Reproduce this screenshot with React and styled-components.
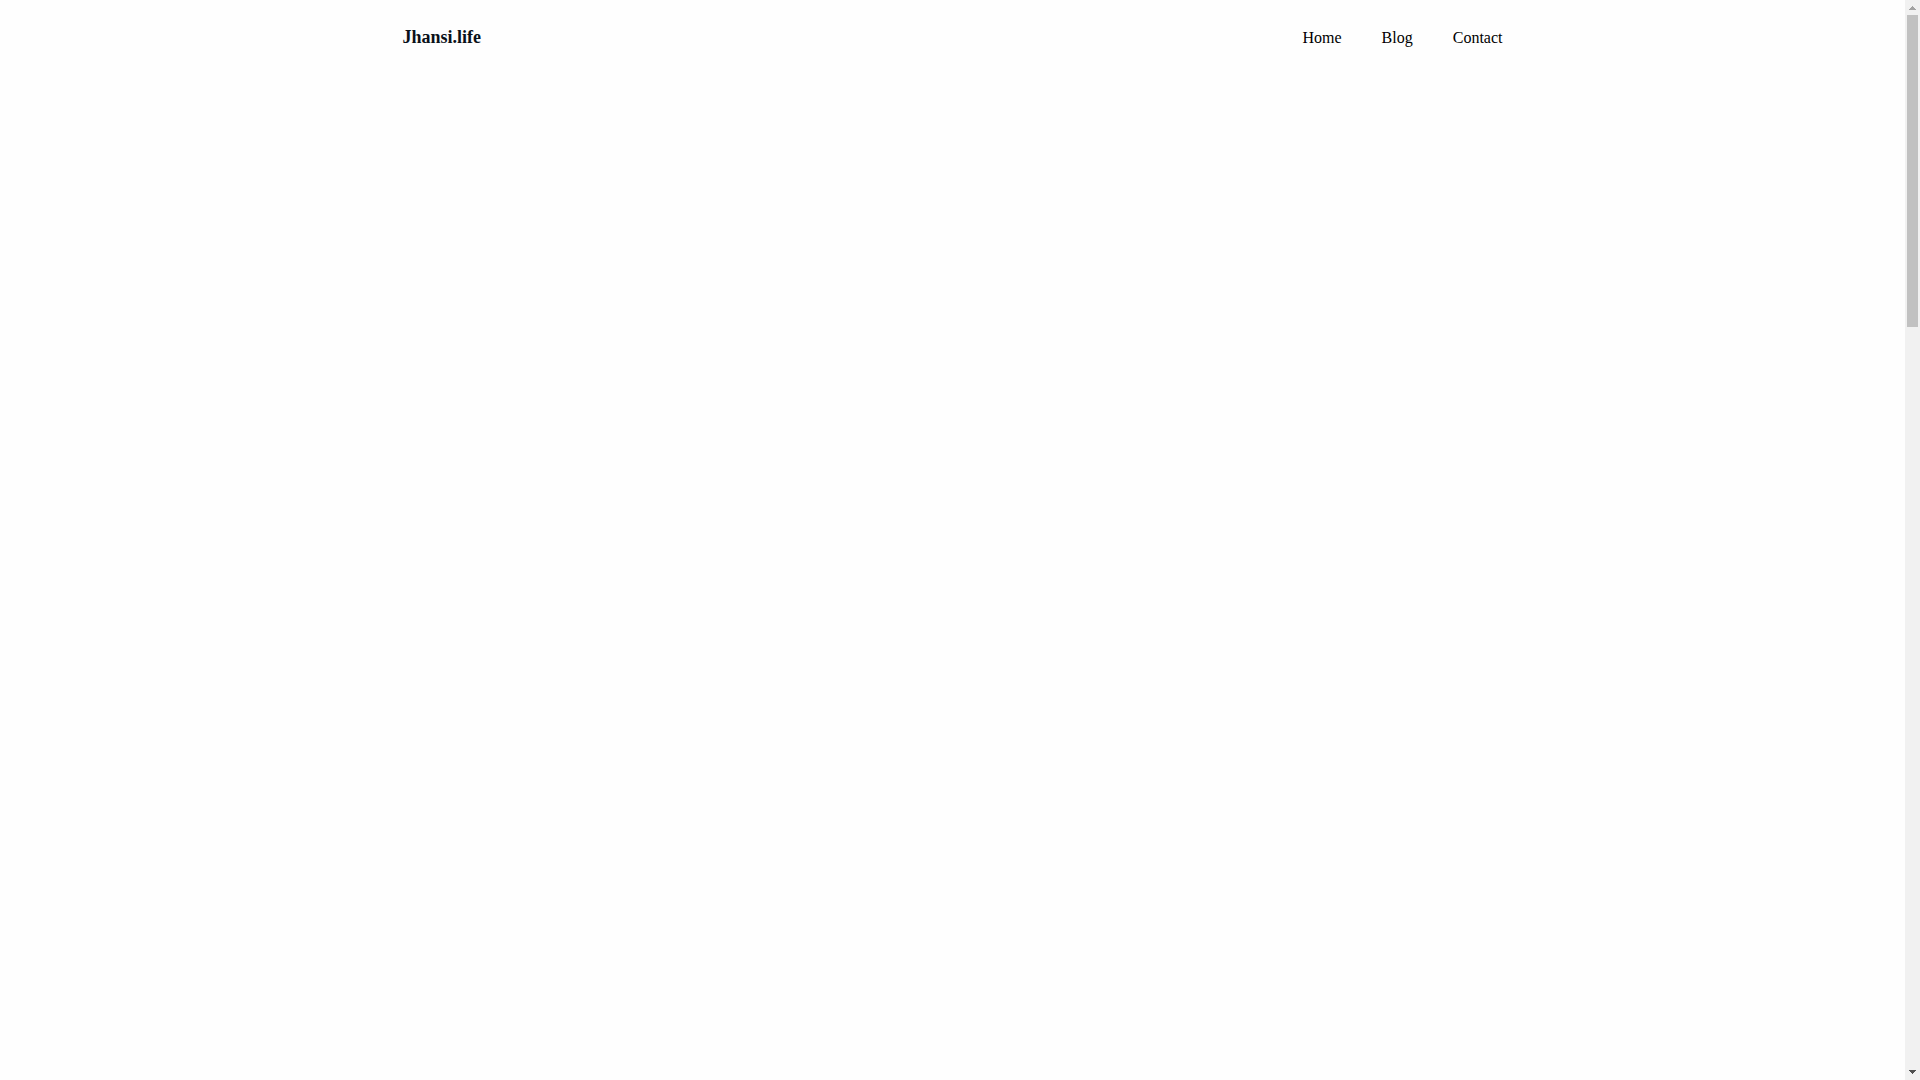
import React from "react";
import styled, { createGlobalStyle } from "styled-components";

const GlobalStyle = createGlobalStyle`
  *, *::before, *::after { box-sizing: border-box; }
  body {
    margin: 0;
    background: #fefefe;
    color: #000;
    font-family: "Liberation Serif", "Times New Roman", serif;
    font-size: 16px;
  }
`;

const Shell = styled.div`
  display: flex;
  height: 100vh;
`;

const Page = styled.div`
  flex: 1;
  min-width: 0;
`;

const Bar = styled.header`
  display: flex;
  align-items: baseline;
  justify-content: space-between;
  max-width: 1100px;
  margin: 0 auto;
  padding: 24px 0;
`;

const Brand = styled.a`
  color: #0a1119;
  font-size: 18px;
  font-weight: 700;
  line-height: 26px;
  text-decoration: none;
`;

const Nav = styled.nav`
  display: flex;
  gap: 40px;
`;

const NavLink = styled.a`
  color: #000;
  line-height: 28px;
  text-decoration: none;
`;

const ScrollTrack = styled.div`
  display: flex;
  flex-direction: column;
  flex: none;
  width: 15px;
  background: #f1f1f1;
`;

const ArrowButton = styled.button`
  display: block;
  flex: none;
  width: 15px;
  height: 15px;
  padding: 0;
  border: 0;
  background: transparent;
  color: ${({ disabled }) => (disabled ? "#a3a3a3" : "#505050")};

  svg { display: block; }
`;

const ThumbArea = styled.div`
  flex: 1;
  padding: 0 2px;
`;

const Thumb = styled.div`
  background: #c1c1c1;
`;

const links = ["Home", "Blog", "Contact"];
const visibleShare = 0.297;

function Scrollbar() {
  return (
    <ScrollTrack>
      <ArrowButton type="button" aria-label="Scroll up" disabled>
        <svg width="15" height="15" fill="currentColor" shapeRendering="crispEdges">
          <path d="M7 6h1v1h1v1h1v1h1v1H4V9h1V8h1V7h1z" />
        </svg>
      </ArrowButton>
      <ThumbArea>
        <Thumb style={{ height: `${visibleShare * 100}%` }} />
      </ThumbArea>
      <ArrowButton type="button" aria-label="Scroll down">
        <svg width="15" height="15" fill="currentColor" shapeRendering="crispEdges">
          <path d="M4 5h7v1h-1v1H9v1H8v1H7V8H6V7H5V6H4z" />
        </svg>
      </ArrowButton>
    </ScrollTrack>
  );
}

export default function App() {
  return (
    <>
      <GlobalStyle />
      <Shell>
        <Page>
          <Bar>
            <Brand href="#home">Jhansi.life</Brand>
            <Nav>
              {links.map((label) => (
                <NavLink key={label} href={`#${label.toLowerCase()}`}>
                  {label}
                </NavLink>
              ))}
            </Nav>
          </Bar>
        </Page>
        <Scrollbar />
      </Shell>
    </>
  );
}
